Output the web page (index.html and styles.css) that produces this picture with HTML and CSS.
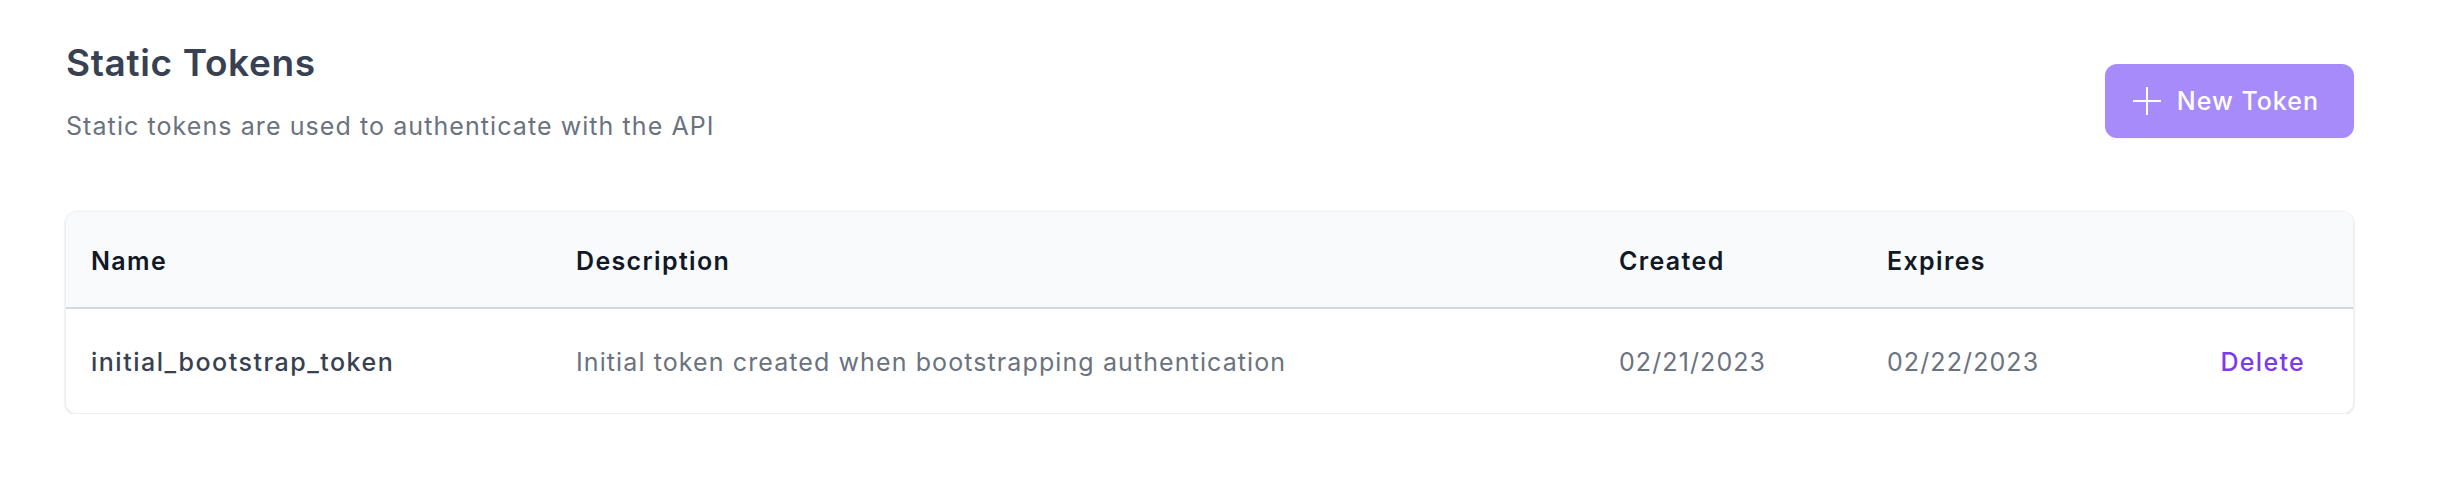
FILE: index.html
```html
<!DOCTYPE html>
<html lang="en">
<head>
<meta charset="utf-8">
<title>Static Tokens</title>
<link rel="stylesheet" href="styles.css">
</head>
<body>
<div class="page">
  <div class="page-header">
    <div class="heading">
      <h1 class="title">Static Tokens</h1>
      <p class="subtitle">Static tokens are used to authenticate with the API</p>
    </div>
    <button class="btn-new" type="button">
      <svg class="plus" width="28" height="28" viewBox="0 0 28 28" aria-hidden="true">
        <path d="M14 0.5V27.5M0.5 14H27.5" stroke="#ffffff" stroke-width="2" fill="none" stroke-linecap="round"/>
      </svg>
      <span>New Token</span>
    </button>
  </div>

  <div class="card">
    <div class="row head">
      <div class="cell">Name</div>
      <div class="cell">Description</div>
      <div class="cell">Created</div>
      <div class="cell">Expires</div>
      <div class="cell"></div>
    </div>
    <div class="row body">
      <div class="cell name">initial_bootstrap_token</div>
      <div class="cell muted">Initial token created when bootstrapping authentication</div>
      <div class="cell muted">02/21/2023</div>
      <div class="cell muted">02/22/2023</div>
      <div class="cell action"><a class="delete" href="#">Delete</a></div>
    </div>
  </div>
</div>
</body>
</html>
```

FILE: styles.css
```css
* { box-sizing: border-box; }

html, body {
  margin: 0;
  padding: 0;
  background: #ffffff;
}

body {
  font-family: Inter, "Noto Sans", "Liberation Sans", sans-serif;
  font-size: 25px;
  line-height: 37px;
  color: #374151;
  letter-spacing: 1.1px;
}

.page {
  padding: 38px 88px 0 66px;
}

.page-header {
  display: flex;
  justify-content: space-between;
  align-items: flex-start;
}

.title {
  margin: 0;
  font-size: 37px;
  line-height: 50px;
  font-weight: 600;
  color: #374151;
  letter-spacing: 0.65px;
}

.subtitle {
  margin: 20px 0 0 0;
  font-size: 25px;
  line-height: 37px;
  color: #6b7280;
  letter-spacing: 1.08px;
}

.btn-new {
  margin-top: 26px;
  display: flex;
  align-items: center;
  gap: 16px;
  height: 74px;
  padding: 0 35px 0 28px;
  border: none;
  border-radius: 12px;
  background: #a78bfa;
  color: #ffffff;
  font-family: inherit;
  font-size: 25px;
  font-weight: 500;
  line-height: 37px;
  letter-spacing: 1px;
  box-shadow: 0 1px 2px rgba(0, 0, 0, 0.05);
}

.plus { display: block; }

.card {
  margin-top: 66px;
  margin-left: -1px;
  border: 1px solid #eceef1;
  border-radius: 12px;
  overflow: hidden;
  box-shadow: 0 1px 3px rgba(0, 0, 0, 0.10), 0 1px 2px rgba(0, 0, 0, 0.06);
}

.row {
  display: grid;
  grid-template-columns: 485px 1043px 268px 268px 1fr;
}

.row.head {
  background: #f9fafb;
  border-bottom: 2px solid #d5d8dd;
  padding: 31px 0 27px 0;
  font-weight: 600;
  color: #111827;
  letter-spacing: 1.35px;
}

.row.body {
  background: #ffffff;
  padding: 35px 0 32px 0;
}

.cell {
  padding-left: 25px;
  white-space: nowrap;
}

.cell.name {
  color: #374151;
  font-weight: 500;
  letter-spacing: 1.5px;
}

.cell.muted {
  color: #6b7280;
}

.cell.action {
  text-align: right;
  padding-right: 48px;
}

.delete {
  color: #7c3aed;
  font-weight: 500;
  letter-spacing: 1.3px;
  text-decoration: none;
}
```
